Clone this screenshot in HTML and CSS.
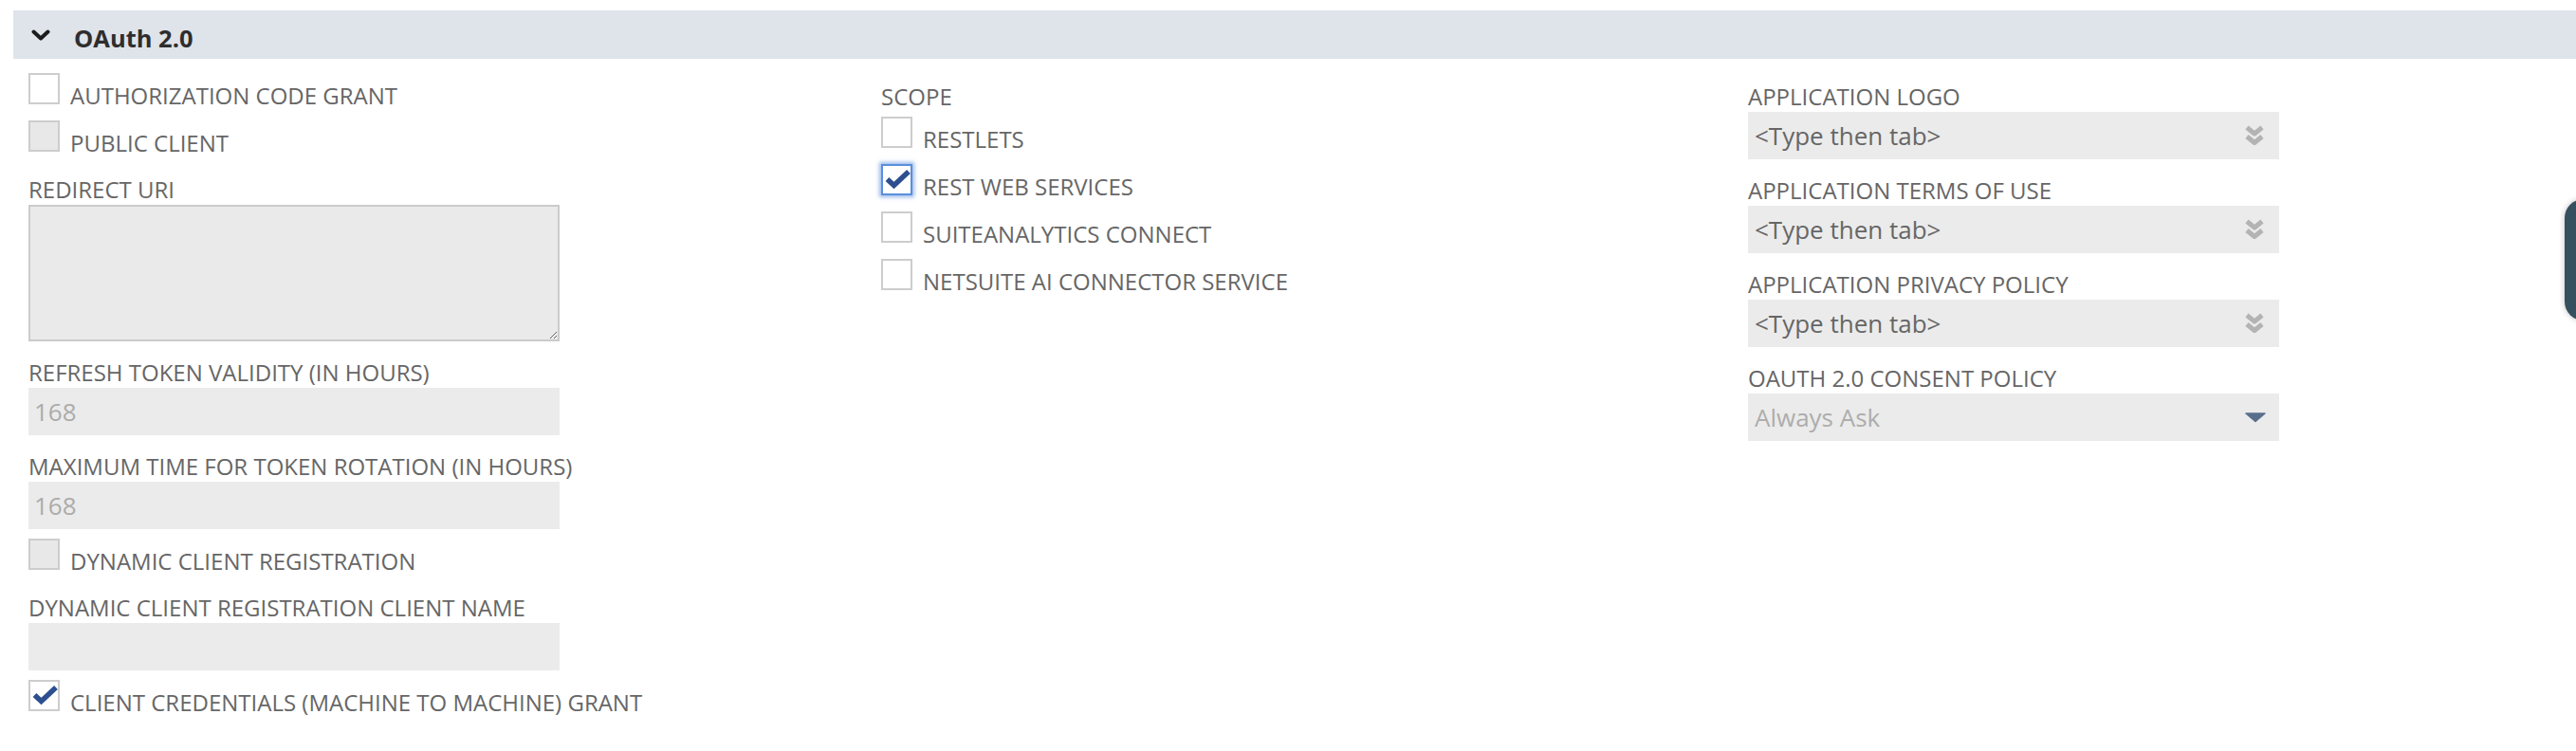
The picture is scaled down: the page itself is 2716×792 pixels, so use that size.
FILE: index.html
```html
<!DOCTYPE html>
<html lang="en">
<head>
<meta charset="utf-8">
<title>OAuth 2.0</title>
<link rel="stylesheet" href="styles.css">
</head>
<body>
<section class="subtab">
  <header class="subtab-head">
    <svg class="toggle" width="20" height="12" viewBox="0 0 20 12" aria-hidden="true"><path d="M2.5 2.5 L10 9.5 L17.5 2.5"/></svg>
    <h2 class="subtab-title">OAuth 2.0</h2>
  </header>

  <div class="form-grid">
    <!-- grant settings -->
    <div class="col">
      <label class="cb-row"><span class="cb"></span><span class="cb-text">AUTHORIZATION CODE GRANT</span></label>
      <label class="cb-row"><span class="cb cb-disabled"></span><span class="cb-text">PUBLIC CLIENT</span></label>

      <div class="field">
        <div class="field-label">REDIRECT URI</div>
        <textarea class="textarea" readonly></textarea>
      </div>

      <div class="field">
        <div class="field-label">REFRESH TOKEN VALIDITY (IN HOURS)</div>
        <input class="input input-muted" type="text" value="168" readonly>
      </div>

      <div class="field">
        <div class="field-label">MAXIMUM TIME FOR TOKEN ROTATION (IN HOURS)</div>
        <input class="input input-muted" type="text" value="168" readonly>
      </div>

      <label class="cb-row"><span class="cb cb-disabled"></span><span class="cb-text">DYNAMIC CLIENT REGISTRATION</span></label>

      <div class="field">
        <div class="field-label">DYNAMIC CLIENT REGISTRATION CLIENT NAME</div>
        <input class="input" type="text" value="" readonly>
      </div>

      <label class="cb-row"><span class="cb"><svg class="tick" viewBox="0 0 29 29"><path d="M4.5 14 L11.5 20.5 L27 6"/></svg></span><span class="cb-text">CLIENT CREDENTIALS (MACHINE TO MACHINE) GRANT</span></label>
    </div>

    <!-- scope -->
    <div class="col">
      <div class="field">
        <div class="field-label">SCOPE</div>
        <div class="cb-group">
          <label class="cb-row"><span class="cb"></span><span class="cb-text">RESTLETS</span></label>
          <label class="cb-row"><span class="cb cb-focus"><svg class="tick" viewBox="0 0 29 29"><path d="M4.5 14 L11.5 20.5 L27 6"/></svg></span><span class="cb-text">REST WEB SERVICES</span></label>
          <label class="cb-row"><span class="cb"></span><span class="cb-text">SUITEANALYTICS CONNECT</span></label>
          <label class="cb-row"><span class="cb"></span><span class="cb-text">NETSUITE AI CONNECTOR SERVICE</span></label>
        </div>
      </div>
    </div>

    <!-- application details -->
    <div class="col">
      <div class="field">
        <div class="field-label">APPLICATION LOGO</div>
        <div class="lookup"><span>&lt;Type then tab&gt;</span><svg class="lookup-icon" width="22" height="24" viewBox="0 0 22 24"><path d="M3 3.5 L11 10 L19 3.5"/><path d="M3 13 L11 19.5 L19 13"/></svg></div>
      </div>
      <div class="field">
        <div class="field-label">APPLICATION TERMS OF USE</div>
        <div class="lookup"><span>&lt;Type then tab&gt;</span><svg class="lookup-icon" width="22" height="24" viewBox="0 0 22 24"><path d="M3 3.5 L11 10 L19 3.5"/><path d="M3 13 L11 19.5 L19 13"/></svg></div>
      </div>
      <div class="field">
        <div class="field-label">APPLICATION PRIVACY POLICY</div>
        <div class="lookup"><span>&lt;Type then tab&gt;</span><svg class="lookup-icon" width="22" height="24" viewBox="0 0 22 24"><path d="M3 3.5 L11 10 L19 3.5"/><path d="M3 13 L11 19.5 L19 13"/></svg></div>
      </div>
      <div class="field">
        <div class="field-label">OAUTH 2.0 CONSENT POLICY</div>
        <div class="lookup lookup-select"><span class="select-value">Always Ask</span><svg class="select-arrow" width="24" height="12" viewBox="0 0 24 12"><path d="M2 2 H22 L12 10.5 Z"/></svg></div>
      </div>
    </div>
  </div>
</section>

<div class="side-tab"></div>
</body>
</html>
```

FILE: styles.css
```css
html, body {
  margin: 0;
  background: #ffffff;
}

body {
  font-family: "Open Sans", "DejaVu Sans", sans-serif;
  font-size: 24px;
  color: #666666;
  overflow: hidden;
}

/* section header */
.subtab {
  padding: 11px 0 0 14px;
}

.subtab-head {
  display: flex;
  align-items: center;
  height: 51px;
  background: #dfe3ea;
}

.toggle {
  margin-left: 19px;
  fill: none;
  stroke: #1c1c1c;
  stroke-width: 4;
  stroke-linecap: round;
  stroke-linejoin: round;
}

.subtab-title {
  margin: 0 0 0 25px;
  padding-top: 6px;
  font-size: 25.5px;
  font-weight: 700;
  line-height: 34px;
  color: #2e2e2e;
}

/* three field columns */
.form-grid {
  display: grid;
  grid-template-columns: 899px 914px 1fr;
  padding: 7px 0 0 16px;
}

.field {
  margin-top: 16px;
}

.field-label {
  line-height: 33px;
  white-space: nowrap;
}

/* checkboxes */
.cb-row {
  display: block;
  margin-top: 10px;
  line-height: 33px;
  white-space: nowrap;
}

.col > .cb-row:first-child {
  margin-top: 8px;
}

.cb-group > .cb-row:first-child {
  margin-top: 5px;
}

.cb {
  display: inline-block;
  vertical-align: baseline;
  box-sizing: border-box;
  width: 33px;
  height: 33px;
  margin-right: 11px;
  overflow: hidden;
  border: 2px solid #cdcdcd;
  background: #ffffff;
}

.cb-disabled {
  background: #e8e8e8;
}

.cb-focus {
  border-color: #5b8fdb;
  box-shadow: 0 0 4px 2px rgba(86, 140, 220, 0.6);
}

.tick {
  display: block;
  width: 29px;
  height: 29px;
  fill: none;
  stroke: #2d4f8f;
  stroke-width: 5.5;
  stroke-linejoin: miter;
}

/* text inputs */
.textarea {
  display: block;
  box-sizing: border-box;
  width: 560px;
  height: 144px;
  margin: 0;
  border: 2px solid #cbcbcb;
  background: #eaeaea;
  font: inherit;
  resize: both;
  outline: none;
}

.input {
  display: block;
  box-sizing: border-box;
  width: 560px;
  height: 50px;
  margin: 0;
  padding: 0 6px;
  border: 0;
  background: #ebebeb;
  font-family: inherit;
  font-size: 26px;
  color: #666666;
  outline: none;
}

.input-muted {
  color: #ababab;
}

/* lookups and selects */
.lookup {
  display: flex;
  align-items: center;
  justify-content: space-between;
  box-sizing: border-box;
  width: 560px;
  height: 50px;
  padding: 0 15px 0 7px;
  background: #ebebeb;
  font-size: 26px;
  line-height: 35px;
  color: #666666;
}

.lookup-icon {
  fill: none;
  stroke: #b3b3b3;
  stroke-width: 5;
  stroke-linejoin: round;
}

.lookup-select {
  padding-right: 13px;
}

.select-value {
  color: #adadad;
}

.select-arrow {
  fill: #5a6e8c;
  stroke: #5a6e8c;
  stroke-width: 1.5;
  stroke-linejoin: round;
}

/* docked side panel handle */
.side-tab {
  position: fixed;
  top: 210px;
  right: -30px;
  width: 42px;
  height: 128px;
  border-radius: 20px;
  background: #35505f;
  box-shadow: 0 0 6px rgba(0, 0, 0, 0.25);
}
```
